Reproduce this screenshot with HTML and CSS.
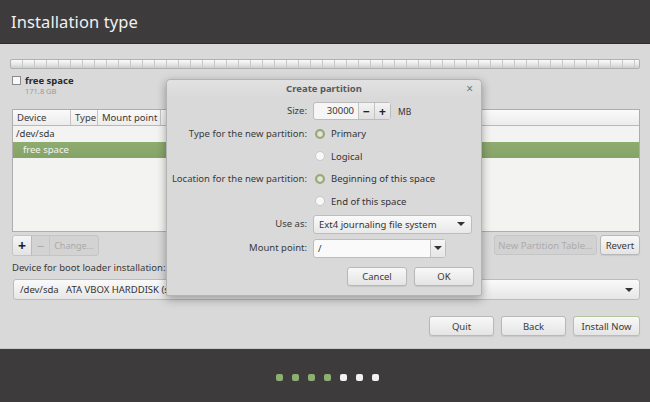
FILE: index.html
```html
<!DOCTYPE html>
<html>
<head>
<meta charset="utf-8">
<link rel="stylesheet" href="styles.css">
</head>
<body>
<div class="app">
  <header class="top"><h1>Installation type</h1></header>
  <main class="main">
    <div class="pbar"></div>
    <div class="legend">
      <span class="chk"></span>
      <div class="legend-text">
        <div class="legend-name">free space</div>
        <div class="legend-size">171.8 GB</div>
      </div>
    </div>
    <div class="table">
      <div class="thead">
        <div class="th c1">Device</div>
        <div class="th c2">Type</div>
        <div class="th c3">Mount point</div>
        <div class="th c4"></div>
      </div>
      <div class="tr">/dev/sda</div>
      <div class="tr sel">free space</div>
    </div>
    <div class="tools">
      <div class="toolgroup">
        <span class="tbtn plus">+</span>
        <span class="tbtn minus dim">−</span>
        <span class="tbtn change dim">Change...</span>
      </div>
      <div class="toolright">
        <span class="btn dimbtn">New Partition Table...</span>
        <span class="btn revert">Revert</span>
      </div>
    </div>
    <div class="bootlabel">Device for boot loader installation:</div>
    <div class="bootcombo"><span>/dev/sda&nbsp;&nbsp;&nbsp;ATA VBOX HARDDISK (sda)</span><span class="arrow"></span></div>
    <div class="actions">
      <span class="btn act">Quit</span>
      <span class="btn act">Back</span>
      <span class="btn act install">Install Now</span>
    </div>
  </main>
  <footer class="bottom">
    <div class="dots">
      <span class="dot on"></span><span class="dot on"></span><span class="dot on"></span><span class="dot on"></span><span class="dot"></span><span class="dot"></span><span class="dot"></span>
    </div>
  </footer>

  <div class="dialog">
    <div class="dtitle"><span>Create partition</span><span class="close">×</span></div>
    <div class="dgrid">
      <div class="lbl">Size:</div>
      <div class="ctl">
        <span class="spin"><span class="spinval">30000</span><span class="sbtn">−</span><span class="sbtn">+</span></span>
        <span class="unit">MB</span>
      </div>
      <div class="lbl">Type for the new partition:</div>
      <div class="ctl"><span class="radio on"></span>Primary</div>
      <div class="lbl"></div>
      <div class="ctl"><span class="radio"></span>Logical</div>
      <div class="lbl">Location for the new partition:</div>
      <div class="ctl"><span class="radio on"></span>Beginning of this space</div>
      <div class="lbl"></div>
      <div class="ctl"><span class="radio"></span>End of this space</div>
      <div class="lbl">Use as:</div>
      <div class="ctl"><span class="combo"><span>Ext4 journaling file system</span><span class="arrow"></span></span></div>
      <div class="lbl">Mount point:</div>
      <div class="ctl"><span class="mentry"><span class="mval">/</span><span class="mbtn"><span class="arrow"></span></span></span></div>
    </div>
    <div class="dbtns">
      <span class="btn dbtn">Cancel</span>
      <span class="btn dbtn">OK</span>
    </div>
  </div>
</div>
</body>
</html>
```
FILE: styles.css
```css
* { box-sizing: border-box; }
html, body { margin: 0; padding: 0; }
body {
  width: 650px; height: 402px; overflow: hidden;
  font-family: "Noto Sans", "DejaVu Sans", sans-serif;
  font-size: 9.5px; color: #3c3c3c;
  background: #d8d8d8;
}
.app { position: relative; width: 650px; height: 402px; display: flex; flex-direction: column; }
.top { height: 44px; background: #3d3b3c; display: flex; align-items: center; padding-left: 11px; border-bottom: 1px solid #2f2e2f; }
.top h1 { margin: 0; font-weight: normal; font-size: 16.5px; color: #f0f0f0; letter-spacing: 0.1px; }
.main { flex: 1; display: flex; flex-direction: column; padding: 0 10px 0 12px; background: #d9d9d9; }
.pbar {
  margin: 15px 0 0 -2px; height: 10px; border: 1px solid #b0b0b0; border-radius: 2px;
  background:
    repeating-linear-gradient(90deg, transparent 0 11px, #c9c9c9 11px 12px),
    linear-gradient(#fbfbfb, #e6e6e6 55%, #cdcdcd);
}
.legend { display: flex; gap: 4px; margin-top: 6px; }
.chk { width: 9px; height: 9px; border: 1px solid #8a8a8a; background: #f8f8f8; margin-top: 1px; }
.legend-name { font-weight: bold; font-size: 9.5px; color: #2a2a2a; line-height: 11px; }
.legend-size { font-size: 7.5px; color: #9a9a9a; line-height: 10px; }
.table { margin-top: 13px; height: 123px; border: 1px solid #adadad; background: #f3f4f2; display: flex; flex-direction: column; }
.thead { display: flex; height: 16px; background: linear-gradient(#fafafa, #ececec); border-bottom: 1px solid #b9b9b9; }
.th { padding-left: 4px; line-height: 15px; color: #3a3a3a; border-right: 1px solid #c4c4c4; }
.c1 { width: 58px; }
.c2 { width: 27px; }
.c3 { width: 63px; }
.c4 { flex: 1; border-right: none; }
.tr { height: 16px; line-height: 16px; padding-left: 3px; color: #333; }
.tr.sel { background: linear-gradient(#8eab70, #86a367); color: #f2f6ee; padding-left: 10px; }
.tools { margin-top: 3px; height: 21px; display: flex; justify-content: space-between; }
.toolgroup { display: flex; border: 1px solid #c4c4c4; border-radius: 3px; background: #d3d3d3; }
.tbtn { display: flex; align-items: center; justify-content: center; height: 19px; color: #aaa; }
.plus { width: 19px; font-weight: bold; font-size: 14px; color: #1e1e1e; background: linear-gradient(#f5f5f5, #e3e3e3); border-right: 1px solid #bbb; border-radius: 2px 0 0 2px; }
.minus { width: 18px; font-size: 13px; border-right: 1px solid #c8c8c8; }
.change { width: 48px; font-size: 9px; }
.toolright { display: flex; gap: 3px; }
.btn { display: inline-flex; align-items: center; justify-content: center; height: 20px; border: 1px solid #b8b8b8; border-radius: 3px; background: linear-gradient(#f8f8f8, #e4e4e4); color: #3a3a3a; box-shadow: 0 1px 1px rgba(0,0,0,0.08); }
.dimbtn { width: 103px; color: #ababab; background: #d2d2d2; border-color: #c6c6c6; box-shadow: none; }
.revert { width: 40px; }
.bootlabel { margin-top: 6px; line-height: 12px; color: #3a3a3a; }
.bootcombo { margin-top: 5px; margin-left: 1px; height: 21px; border: 1px solid #bcbcbc; border-radius: 3px; background: linear-gradient(#fafafa, #e6e6e6); display: flex; align-items: center; justify-content: space-between; padding: 0 6px 0 6px; color: #333; }
.arrow { width: 0; height: 0; border-left: 4px solid transparent; border-right: 4px solid transparent; border-top: 4px solid #333; }
.actions { margin-top: 16px; display: flex; justify-content: flex-end; gap: 7px; }
.act { width: 65px; }
.install { width: 67px; border-color: #b3c59d; }
.bottom { height: 54px; background: #3d3b3c; display: flex; justify-content: center; padding-top: 25px; padding-left: 4px; border-top: 1px solid #c8c8c8; }
.dots { display: flex; gap: 9px; height: 7px; }
.dot { width: 7px; height: 7px; border-radius: 2px; background: #f2f2f2; }
.dot.on { background: #8fae72; }

.dialog {
  position: absolute; left: 166px; top: 79px; width: 316px; height: 217px;
  background: #d9d9d9; border: 1px solid #b3b3b3; border-radius: 4px 4px 2px 2px;
  box-shadow: 0 3px 10px rgba(0,0,0,0.35);
  display: flex; flex-direction: column;
}
.dtitle { height: 18px; display: flex; align-items: center; justify-content: center; position: relative; font-weight: bold; color: #5a5a5a; font-size: 9.5px; background: linear-gradient(#e2e2e2, #d9d9d9); border-radius: 4px 4px 0 0; padding-bottom: 1px; }
.close { position: absolute; right: 8px; top: 0px; font-weight: normal; color: #777; font-size: 12px; }
.dgrid { margin-top: 4px; display: grid; grid-template-columns: 140px 1fr; column-gap: 6px; grid-template-rows: 18px 18px 18px 18px 18px 19px 19px; row-gap: 4.6px; }
.lbl { text-align: right; line-height: 18px; color: #3a3a3a; }
.ctl { display: flex; align-items: center; color: #333; }
.spin { display: flex; height: 18px; border: 1px solid #bcbcbc; border-radius: 3px; background: #f6f6f6; }
.spinval { width: 44px; text-align: right; padding-right: 4px; line-height: 16px; }
.sbtn { width: 16px; display: flex; align-items: center; justify-content: center; font-weight: bold; font-size: 12px; color: #222; background: linear-gradient(#f3f3f3, #e0e0e0); border-left: 1px solid #c3c3c3; }
.unit { margin-left: 7px; font-size: 8.5px; }
.radio { width: 10px; height: 10px; border-radius: 50%; border: 1px solid #c9c9c9; background: #f7f7f7; margin: 0 6px 0 2px; }
.radio.on { border: 2px solid #98a878; background: radial-gradient(circle, #e2e6d6 0 2px, #c7cfb0 3px); }
.combo { width: 159px; height: 19px; border: 1px solid #bdbdbd; border-radius: 3px; background: linear-gradient(#fafafa, #e8e8e8); display: flex; align-items: center; justify-content: space-between; padding: 0 6px 0 5px; }
.mentry { width: 133px; height: 19px; display: flex; border: 1px solid #bdbdbd; border-radius: 3px; background: #fafafa; }
.mval { flex: 1; padding-left: 4px; line-height: 17px; }
.mbtn { width: 15px; display: flex; align-items: center; justify-content: center; border-left: 1px solid #c6c6c6; background: linear-gradient(#f6f6f6, #e6e6e6); }
.dbtns { margin-top: 9px; display: flex; justify-content: flex-end; gap: 7px; padding-right: 7px; }
.dbtn { width: 60px; height: 19px; }
```
